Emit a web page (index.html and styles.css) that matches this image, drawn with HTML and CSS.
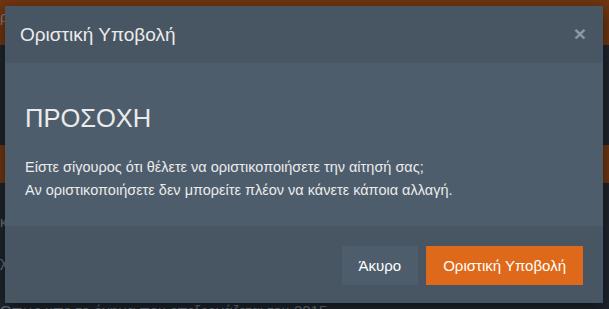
FILE: index.html
```html
<!DOCTYPE html>
<html lang="el">
<head>
<meta charset="utf-8">
<title>Οριστική Υποβολή</title>
<link rel="stylesheet" href="styles.css">
</head>
<body>
<div class="page">
  <div class="navbar"><span class="navtext">ρόγραμμα</span></div>
  <div class="gap1"></div>
  <div class="band"></div>
  <div class="rows">
    <div class="row r1">κατάσταση</div>
    <div class="row r2">χρήστης</div>
    <div class="row r3">Οπως υπο το όχημα που επεξεργάζεται του 2015</div>
  </div>
</div>

<div class="modal">
  <div class="modal-header">
    <h4 class="modal-title">Οριστική Υποβολή</h4>
    <button class="close" type="button">×</button>
  </div>
  <div class="modal-body">
    <h3 class="warn">ΠΡΟΣΟΧΗ</h3>
    <p class="msg">Είστε σίγουρος ότι θέλετε να οριστικοποιήσετε την αίτησή σας;<br>Αν οριστικοποιήσετε δεν μπορείτε πλέον να κάνετε κάποια αλλαγή.</p>
  </div>
  <div class="modal-footer">
    <button class="btn btn-default" type="button">Άκυρο</button>
    <button class="btn btn-primary" type="button">Οριστική Υποβολή</button>
  </div>
</div>
</body>
</html>
```

FILE: styles.css
```css
html, body {
  margin: 0;
  padding: 0;
  overflow: hidden;
}
body {
  width: 609px;
  height: 309px;
  background: #1e252d;
  font-family: "Liberation Sans", Arial, sans-serif;
  color: #ebebeb;
  position: relative;
}
.page {
  display: flex;
  flex-direction: column;
  height: 309px;
  overflow: hidden;
}
.navbar {
  height: 45px;
  flex: none;
  background: #6f3511;
  display: flex;
  align-items: center;
}
.navtext {
  font-size: 15px;
  color: #8a7a70;
  margin-top: -12px;
}
.gap1 {
  height: 100px;
  flex: none;
}
.band {
  height: 38px;
  flex: none;
  background: #6f3511;
}
.rows {
  display: flex;
  flex-direction: column;
  flex: none;
}
.row {
  font-size: 15px;
  color: #6b737c;
  height: 40px;
  line-height: 40px;
}
.r1 {
  margin-top: 19px;
}
.r3 {
  margin-top: 9px;
}

.modal {
  position: absolute;
  left: 5px;
  top: 6px;
  width: 598px;
  background: #4e5d6c;
  box-shadow: 0 5px 15px rgba(0, 0, 0, 0.5);
}
.modal-header {
  background: #485563;
  padding: 15px;
  display: flex;
  align-items: center;
  justify-content: space-between;
}
.modal-title {
  margin: 0;
  font-size: 19px;
  font-weight: normal;
  line-height: 27px;
}
.close {
  border: 0;
  background: transparent;
  padding: 0;
  margin: -3px 2px 0 0;
  font-family: "Liberation Sans", Arial, sans-serif;
  font-size: 21px;
  font-weight: bold;
  line-height: 1;
  color: #8f98a1;
}
.modal-body {
  padding: 20px 20px 24px;
}
.warn {
  margin: 21px 0 23px;
  font-size: 25.5px;
  font-weight: normal;
  line-height: 29px;
}
.msg {
  margin: 0;
  font-size: 14.5px;
  line-height: 23px;
}
.modal-footer {
  background: #485563;
  padding: 20px 20px 18px;
  display: flex;
  justify-content: flex-end;
  gap: 8px;
}
.btn {
  font-family: "Liberation Sans", Arial, sans-serif;
  font-size: 15px;
  line-height: 21px;
  padding: 8px 16px;
  border: 1px solid transparent;
  color: #ffffff;
  border-radius: 0;
}
.btn-default {
  background: #4e5d6c;
  border-color: #4e5d6c;
}
.btn-primary {
  background: #df691a;
  border-color: #df691a;
}
```
